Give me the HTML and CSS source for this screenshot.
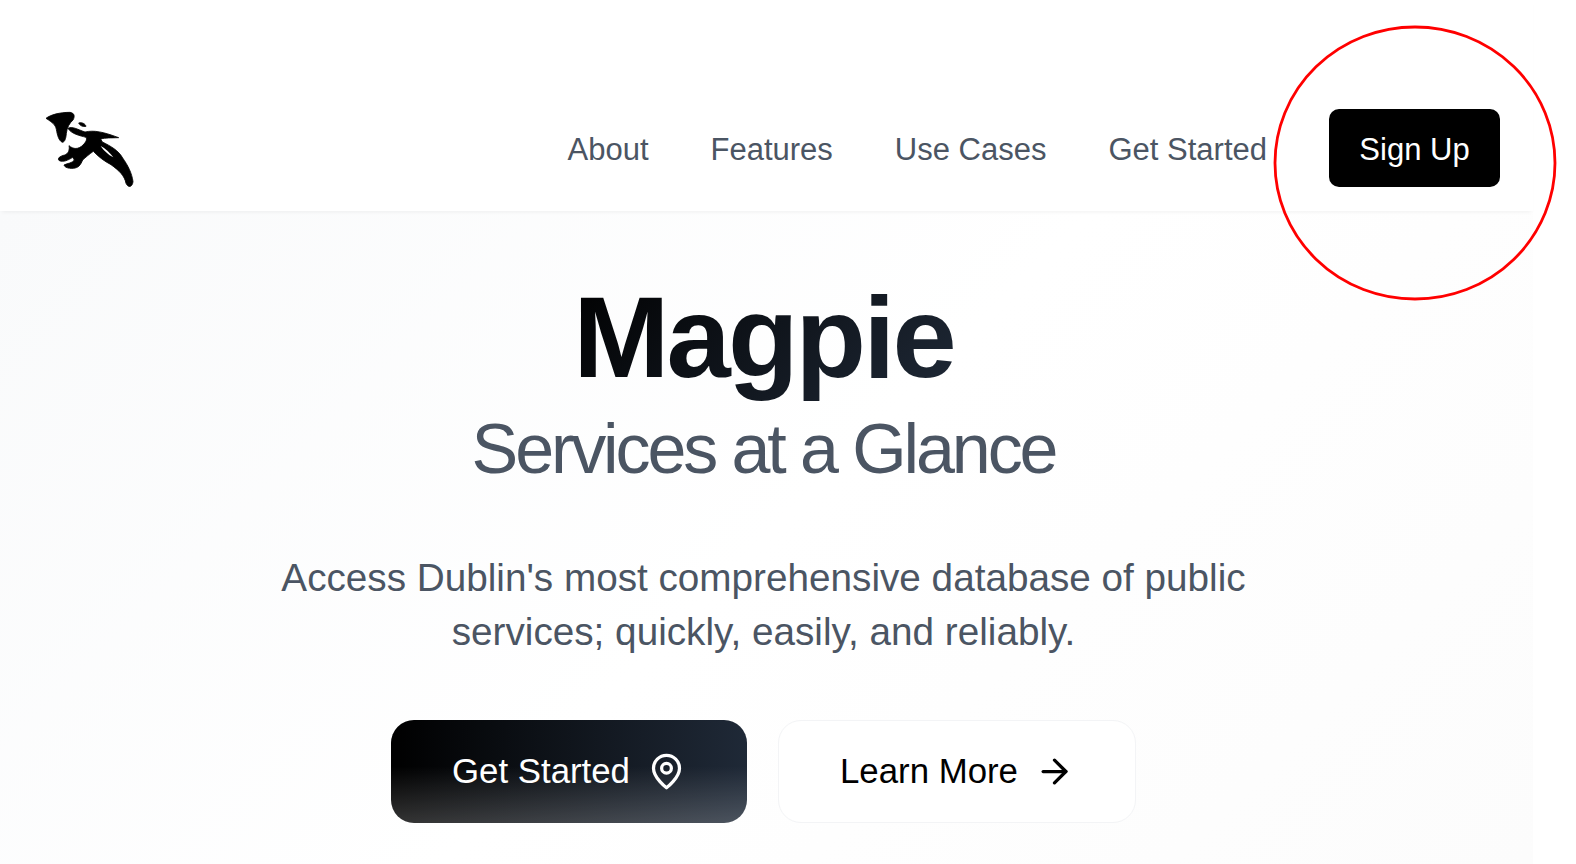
FILE: index.html
```html
<!DOCTYPE html>
<html lang="en">
<head>
<meta charset="utf-8">
<title>Magpie</title>
<link rel="stylesheet" href="styles.css">
</head>
<body>
<div class="page">
  <header class="nav">
    <a class="logo" href="#" aria-label="Magpie">
      <svg class="logo-mark" viewBox="0 0 360 285" width="120" height="95">
        <path d="M48,55 C62,44 90,37 120,37 C134,39 135,50 129,60 C118,70 111,82 109,100 C108,115 104,127 97,127 C86,122 82,105 79,88 C76,74 68,68 48,55 Z"/>
        <path d="M146,69 C155,66 166,71 168,79 C158,81 150,77 146,69 Z"/>
        <path d="M114,85 C126,78 142,88 165,96 C192,90 218,95 266,113 C242,114 226,113 212,117 L217,126 C242,138 266,152 278,174 C293,195 306,220 309,245 C307,262 294,264 288,250 C284,228 268,212 243,194 C223,184 203,168 190,154 C177,163 167,172 158,180 C151,196 146,203 130,205 C115,206 104,202 102,195 C114,189 126,190 133,180 L128,172 C114,181 100,187 88,182 C81,176 88,169 104,165 C114,162 120,150 117,137 C130,148 145,149 159,135 C168,126 172,118 168,112 C150,107 124,102 114,85 Z"/>
        <path class="logo-stripe" d="M212,138 C225,145 240,158 250,172 C235,165 220,150 212,138 Z"/>
      </svg>
    </a>
    <nav class="links">
      <a href="#">About</a>
      <a href="#">Features</a>
      <a href="#">Use Cases</a>
      <a href="#">Get Started</a>
      <a class="signup" href="#">Sign Up</a>
    </nav>
  </header>
  <main class="hero">
    <h1>Magpie</h1>
    <h2>Services at a Glance</h2>
    <p>Access Dublin's most comprehensive database of public services; quickly, easily, and reliably.</p>
    <div class="actions">
      <a class="btn primary" href="#">Get Started
        <svg class="icon" viewBox="0 0 24 24" fill="none" stroke="currentColor" stroke-width="2" stroke-linecap="round" stroke-linejoin="round"><path d="M20 10c0 6-8 12-8 12s-8-6-8-12a8 8 0 0 1 16 0Z"/><circle cx="12" cy="10" r="3"/></svg>
      </a>
      <a class="btn secondary" href="#">Learn More
        <svg class="icon" viewBox="0 0 24 24" fill="none" stroke="currentColor" stroke-width="2" stroke-linecap="round" stroke-linejoin="round"><path d="M5 12h14"/><path d="m12 5 7 7-7 7"/></svg>
      </a>
    </div>
  </main>
</div>
<svg class="annotation" viewBox="0 0 284 276" width="284" height="276"><ellipse cx="142" cy="138" rx="140" ry="136"/></svg>
</body>
</html>
```
FILE: styles.css
```css
* { box-sizing: border-box; }
html, body { margin: 0; height: 100%; background: #fff; overflow: hidden; }
body { font-family: "Liberation Sans", Arial, sans-serif; position: relative; }
a { text-decoration: none; color: inherit; }

.page { width: 1533px; height: 864px; display: flex; flex-direction: column; }

.nav {
  height: 211px;
  flex: none;
  padding: 109px 33px 24px 30px;
  display: flex;
  justify-content: space-between;
  align-items: flex-start;
  background: #fff;
  box-shadow: 0 3px 4px -2px rgba(0, 0, 0, .06);
  position: relative;
}
.logo { display: block; margin-top: -9px; }
.logo-mark { display: block; filter: blur(.5px); }
.logo-mark path { stroke: #000; stroke-width: 2.5; }
.logo-mark .logo-stripe { fill: #fff; stroke: none; }

.links {
  display: flex;
  align-items: center;
  gap: 62px;
  height: 78px;
  font-size: 31px;
  color: #4b5563;
}
.links a { padding-top: 4px; }
.links .signup {
  width: 171px;
  height: 78px;
  border-radius: 10px;
  background: #000;
  color: #fff;
  display: flex;
  align-items: center;
  justify-content: center;
}

.hero {
  flex: 1;
  display: flex;
  flex-direction: column;
  align-items: center;
  padding: 56px 6px 0 0;
  background: linear-gradient(135deg, #f9fafb 0%, #fff 50%, #fcfcfc 100%);
}
h1 {
  margin: 0;
  font-size: 115.5px;
  line-height: 140px;
  font-weight: 700;
  letter-spacing: -2.9px;
  background: linear-gradient(135deg, #000, #1f2937);
  -webkit-background-clip: text;
  background-clip: text;
  color: transparent;
}
h2 {
  margin: 0;
  font-size: 70px;
  line-height: 84px;
  font-weight: 400;
  letter-spacing: -3.1px;
  color: #4b5563;
}
.hero p {
  margin: 60px 0 0;
  width: 1000px;
  font-size: 38.7px;
  line-height: 54.3px;
  text-align: center;
  color: #4b5563;
}
.actions { display: flex; gap: 31px; margin-top: 60px; }
.btn {
  height: 103px;
  border-radius: 23px;
  display: flex;
  align-items: center;
  justify-content: center;
  gap: 17px;
  font-size: 34.8px;
}
.primary {
  width: 356px;
  color: #fff;
  background:
    linear-gradient(180deg, rgba(255,255,255,0) 45%, rgba(255,255,255,.2) 100%),
    linear-gradient(90deg, #000, #1f2937);
}
.secondary { width: 358px; color: #000; background: #fff; border: 1px solid #f3f4f6; }
.icon { width: 39px; height: 39px; flex: none; }

.annotation { position: absolute; left: 1273px; top: 25px; overflow: visible; }
.annotation ellipse { fill: none; stroke: #f00; stroke-width: 2.8; }
```
